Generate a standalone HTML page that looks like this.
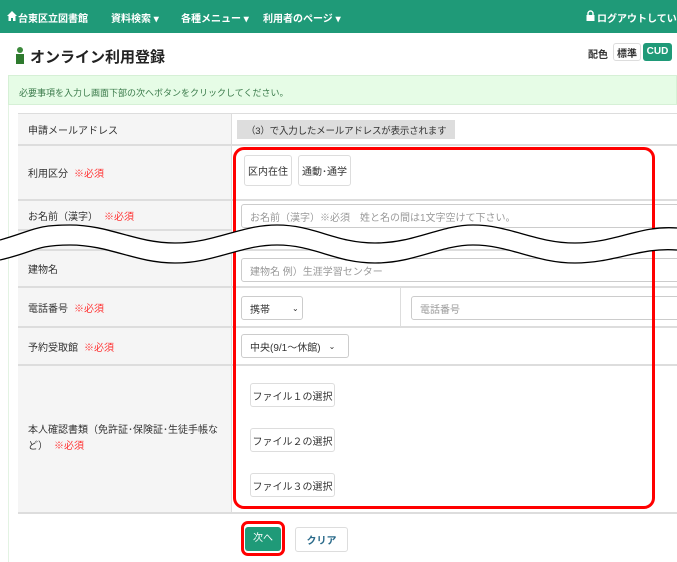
<!DOCTYPE html>
<html><head><meta charset="utf-8"><style>
*{box-sizing:border-box;margin:0;padding:0}
body{width:677px;height:562px;overflow:hidden;background:#fff;font-family:"Liberation Sans","Noto Sans CJK JP",sans-serif;font-size:10px;color:#333;position:relative}
.a{position:absolute;white-space:nowrap}
.nav{left:0;top:0;width:677px;height:33px;background:#1f9a78;color:#fff;font-weight:bold;font-size:10px}
.nav span{position:absolute;top:10px;white-space:nowrap}
.lbl{left:18px;width:213px;background:#f5f5f5;border-bottom:2px solid #ddd;padding-left:10px;display:flex;align-items:center}
.row{left:231px;width:446px;border-bottom:2px solid #ddd}
.inp{border:1px solid #ccc;border-radius:3px;background:#fff;color:#999;padding-left:8px;display:flex;align-items:center}
.btn{border:1px solid #ddd;border-radius:3px;background:#fff;display:flex;align-items:center;justify-content:center;color:#333;font-size:10px}
.req{color:#f33;margin-left:6px}
</style></head><body>
<div class="a nav"><svg class="a" style="left:7px;top:11px" width="10" height="10" viewBox="0 0 10 10"><path d="M5 0L0 5h1.5v5h2.5V7h2v3h2.5V5H10z" fill="#fff"/></svg><span style="left:18px">台東区立図書館</span><span style="left:111px">資料検索 ▾</span><span style="left:181px">各種メニュー ▾</span><span style="left:263px">利用者のページ ▾</span><svg class="a" style="left:586px;top:10px" width="9" height="11" viewBox="0 0 9 11"><path d="M2 5V3.5a2.5 2.5 0 015 0V5" stroke="#fff" stroke-width="1.4" fill="none"/><rect x="0.5" y="5" width="8" height="6" fill="#fff"/></svg><span style="left:597px">ログアウトしています</span></div>
<div class="a" style="left:16px;top:47px;width:8px;height:18px"><div style="width:6px;height:6px;border-radius:50%;background:#3c8a3c;margin:0 auto"></div><div style="width:8px;height:10px;background:#2e7a2e;margin-top:1px"></div></div>
<div class="a" style="left:30px;top:46px;font-size:15px;font-weight:bold;color:#222">オンライン利用登録</div>
<div class="a" style="left:588px;top:46px;font-size:10px;font-weight:bold">配色</div>
<div class="a btn" style="left:613px;top:43px;width:28px;height:18px;font-weight:bold">標準</div>
<div class="a" style="left:643px;top:43px;width:29px;height:18px;background:#1f9a78;color:#fff;font-weight:bold;font-size:10px;border-radius:3px;text-align:center;line-height:18px">CUD</div>
<div class="a" style="left:8px;top:75px;width:669px;height:30px;background:#e6fce6;border:1px solid #d6f0d6;color:#3a7a4a;font-size:9px;padding:10px 0 0 10px">必要事項を入力し画面下部の次へボタンをクリックしてください。</div>
<div class="a" style="left:8px;top:105px;width:1px;height:457px;background:#e3f3e3"></div>
<div class="a" style="left:18px;top:113px;width:659px;height:1px;background:#ddd"></div>
<div class="a" style="left:18px;top:113px;width:1px;height:400px;background:#ddd"></div>
<div class="a" style="left:230px;top:113px;width:2px;height:400px;background:#ddd"></div>
<div class="a lbl" style="top:114px;height:32px">申請メールアドレス</div><div class="a row" style="top:114px;height:32px"></div>
<div class="a" style="left:237px;top:120px;width:218px;height:19px;background:#ddd;padding:3px 0 0 9px;font-size:9.5px;overflow:hidden;letter-spacing:-0.2px">（3）で入力したメールアドレスが表示されます</div>
<div class="a lbl" style="top:146px;height:55px">利用区分<span class="req">※必須</span></div><div class="a row" style="top:146px;height:55px"></div>
<div class="a btn" style="left:244px;top:155px;width:48px;height:31px">区内在住</div>
<div class="a btn" style="left:298px;top:155px;width:53px;height:31px">通動･通学</div>
<div class="a lbl" style="top:201px;height:30px">お名前（漢字）<span class="req">※必須</span></div><div class="a row" style="top:201px;height:50px;border:0"></div>
<div class="a" style="left:18px;top:231px;width:213px;height:20px;background:#f5f5f5;border-bottom:2px solid #ddd"></div>
<div class="a" style="left:231px;top:249px;width:446px;height:2px;background:#ddd"></div>
<div class="a inp" style="left:241px;top:204px;width:440px;height:24px;font-size:10px">お名前（漢字）※必須　姓と名の間は1文字空けて下さい。</div>
<div class="a lbl" style="top:251px;height:37px">建物名</div><div class="a row" style="top:251px;height:37px"></div>
<div class="a inp" style="left:241px;top:258px;width:440px;height:24px;font-size:10px">建物名 例）生涯学習センター</div>
<div class="a lbl" style="top:288px;height:40px">電話番号<span class="req">※必須</span></div><div class="a row" style="top:288px;height:40px"></div>
<div class="a" style="left:400px;top:288px;width:1px;height:38px;background:#ddd"></div>
<div class="a inp" style="left:241px;top:296px;width:62px;height:24px;color:#333;font-size:10px">携帯<span style="margin-left:22px;font-size:8px">⌄</span></div>
<div class="a inp" style="left:411px;top:296px;width:270px;height:24px;font-size:10px">電話番号</div>
<div class="a lbl" style="top:328px;height:38px">予約受取館<span class="req">※必須</span></div><div class="a row" style="top:328px;height:38px"></div>
<div class="a inp" style="left:241px;top:334px;width:108px;height:24px;color:#333;font-size:10px">中央(9/1～休館)<span style="margin-left:8px;font-size:8px">⌄</span></div>
<div class="a lbl" style="top:366px;height:148px;line-height:16px;display:block;padding-top:57px;padding-right:8px;white-space:normal">本人確認書類（免許証･保険証･生徒手帳など）<span class="req">※必須</span></div><div class="a row" style="top:366px;height:148px"></div>
<div class="a btn" style="left:250px;top:383px;width:85px;height:24px">ファイル１の選択</div>
<div class="a btn" style="left:250px;top:428px;width:85px;height:24px">ファイル２の選択</div>
<div class="a btn" style="left:250px;top:473px;width:85px;height:24px">ファイル３の選択</div>
<div class="a" style="left:233px;top:147px;width:422px;height:362px;border:3px solid #f00;border-radius:11px"></div>
<svg class="a" style="left:0;top:215px" width="677" height="60" viewBox="0 215 677 60">
<path d="M0 240 C35 230,35 225,70 225 C110 225,135 243,175 243 C215 243,240 225,277 225 C315 225,335 243,375 243 C415 243,440 225,473 225 C510 225,535 243,575 243 C615 243,640 225,677 228 L677 250 C640 247,615 263,575 263 C535 263,510 245,473 245 C440 245,415 263,375 263 C335 263,315 245,277 245 C240 245,215 263,175 263 C135 263,110 245,70 245 C35 245,35 252,0 260 Z" fill="#fff"/>
<path d="M0 240 C35 230,35 225,70 225 C110 225,135 243,175 243 C215 243,240 225,277 225 C315 225,335 243,375 243 C415 243,440 225,473 225 C510 225,535 243,575 243 C615 243,640 225,677 228" fill="none" stroke="#000" stroke-width="1.3"/>
<path d="M0 260 C35 252,35 245,70 245 C110 245,135 263,175 263 C215 263,240 245,277 245 C315 245,335 263,375 263 C415 263,440 245,473 245 C510 245,535 263,575 263 C615 263,640 247,677 250" fill="none" stroke="#000" stroke-width="1.3"/>
</svg>
<div class="a" style="left:241px;top:521px;width:44px;height:35px;border:3px solid #f00;border-radius:7px"></div>
<div class="a" style="left:245px;top:527px;width:36px;height:24px;background:#1f9a78;color:#fff;border-radius:3px;text-align:center;line-height:24px;font-size:10px">次へ</div>
<div class="a btn" style="left:295px;top:527px;width:53px;height:25px;font-weight:bold;color:#2a6a8a">クリア</div>
</body></html>
